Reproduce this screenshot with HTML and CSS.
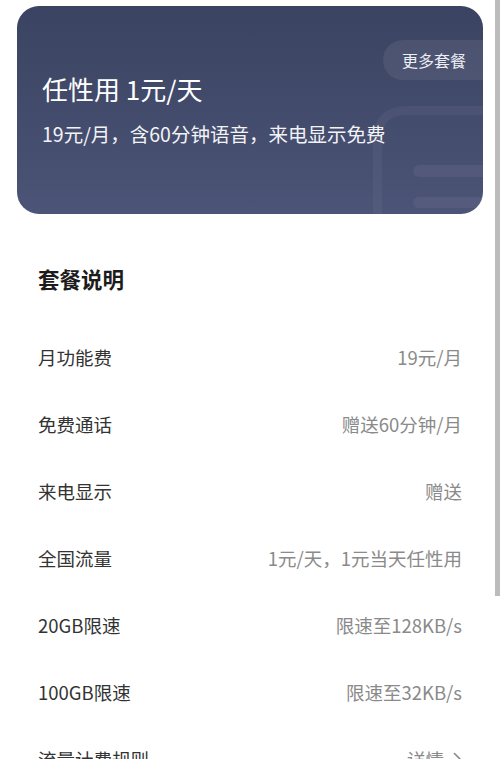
FILE: index.html
```html
<!DOCTYPE html>
<html lang="zh-CN">
<head>
<meta charset="utf-8">
<title>套餐</title>
<link rel="stylesheet" href="styles.css">
</head>
<body>
<div class="page">
  <section class="card">
    <svg class="deco" width="110" height="108" viewBox="0 0 110 108" aria-hidden="true">
      <path d="M4.5 108 V 34 Q 4.5 4.5 34 4.5 H 110" fill="none" stroke="rgba(255,255,255,0.045)" stroke-width="9"/>
      <rect x="40" y="59" width="80" height="12" rx="6" fill="rgba(255,255,255,0.05)"/>
      <rect x="40" y="91" width="80" height="11" rx="5.5" fill="rgba(255,255,255,0.05)"/>
    </svg>
    <div class="more">更多套餐</div>
    <h1 class="title">任性用 1元/天</h1>
    <p class="subtitle">19元/月，含60分钟语音，来电显示免费</p>
  </section>

  <section class="details">
    <h2 class="section-title">套餐说明</h2>
    <div class="row"><span class="label">月功能费</span><span class="value">19元/月</span></div>
    <div class="row"><span class="label">免费通话</span><span class="value">赠送60分钟/月</span></div>
    <div class="row"><span class="label">来电显示</span><span class="value">赠送</span></div>
    <div class="row"><span class="label">全国流量</span><span class="value">1元/天，1元当天任性用</span></div>
    <div class="row"><span class="label">20GB限速</span><span class="value">限速至128KB/s</span></div>
    <div class="row"><span class="label">100GB限速</span><span class="value">限速至32KB/s</span></div>
    <div class="row"><span class="label">流量计费规则</span><span class="value link">详情<svg class="chev" width="9" height="14" viewBox="0 0 9 14"><path d="M1.5 1.5 L7 7 L1.5 12.5" fill="none" stroke="#888" stroke-width="1.6" stroke-linecap="round" stroke-linejoin="round"/></svg></span></div>
  </section>
  <div class="scroll-thumb"></div>
</div>
</body>
</html>
```

FILE: styles.css
```css
html, body {
  margin: 0;
  padding: 0;
  background: #ffffff;
}
body {
  font-family: "Noto Sans CJK SC", "Noto Sans", sans-serif;
  width: 500px;
  height: 759px;
  overflow: hidden;
}
.page {
  position: relative;
  width: 500px;
  height: 759px;
  padding-top: 6px;
  box-sizing: border-box;
}
.card {
  position: relative;
  margin: 0 17px;
  height: 208px;
  border-radius: 22px;
  background: linear-gradient(180deg, #3b4362 0%, #454d6e 60%, #4c5477 100%);
  overflow: hidden;
  box-sizing: border-box;
  padding: 64px 0 0 25px;
}
.deco {
  position: absolute;
  right: 0;
  bottom: 0;
}
.more {
  position: absolute;
  top: 34px;
  right: 0;
  height: 40px;
  width: 100px;
  border-radius: 20px 0 0 20px;
  background: rgba(255,255,255,0.07);
  color: #eceef4;
  font-size: 16px;
  line-height: 40px;
  text-align: left;
  padding-left: 19px;
  box-sizing: border-box;
}
.title {
  margin: 0;
  font-size: 26px;
  font-weight: 400;
  line-height: 38px;
  color: #ffffff;
}
.subtitle {
  margin: 13px 0 0;
  font-size: 19.5px;
  line-height: 26px;
  color: #f2f3f7;
}
.details {
  padding: 0 38px;
}
.section-title {
  margin: 50px 0 0;
  font-size: 21.5px;
  font-weight: 700;
  line-height: 30px;
  color: #1c1c1c;
  margin-bottom: 29px;
}
.row {
  display: flex;
  justify-content: space-between;
  align-items: center;
  height: 67px;
  font-size: 18.5px;
}
.label {
  color: #333333;
}
.value {
  color: #8a8a8a;
}
.link {
  display: flex;
  align-items: center;
  gap: 9px;
}
.chev {
  display: block;
}
.scroll-thumb {
  position: absolute;
  top: 0;
  right: 0;
  width: 5px;
  height: 596px;
  background: #bcbcbc;
}
```
